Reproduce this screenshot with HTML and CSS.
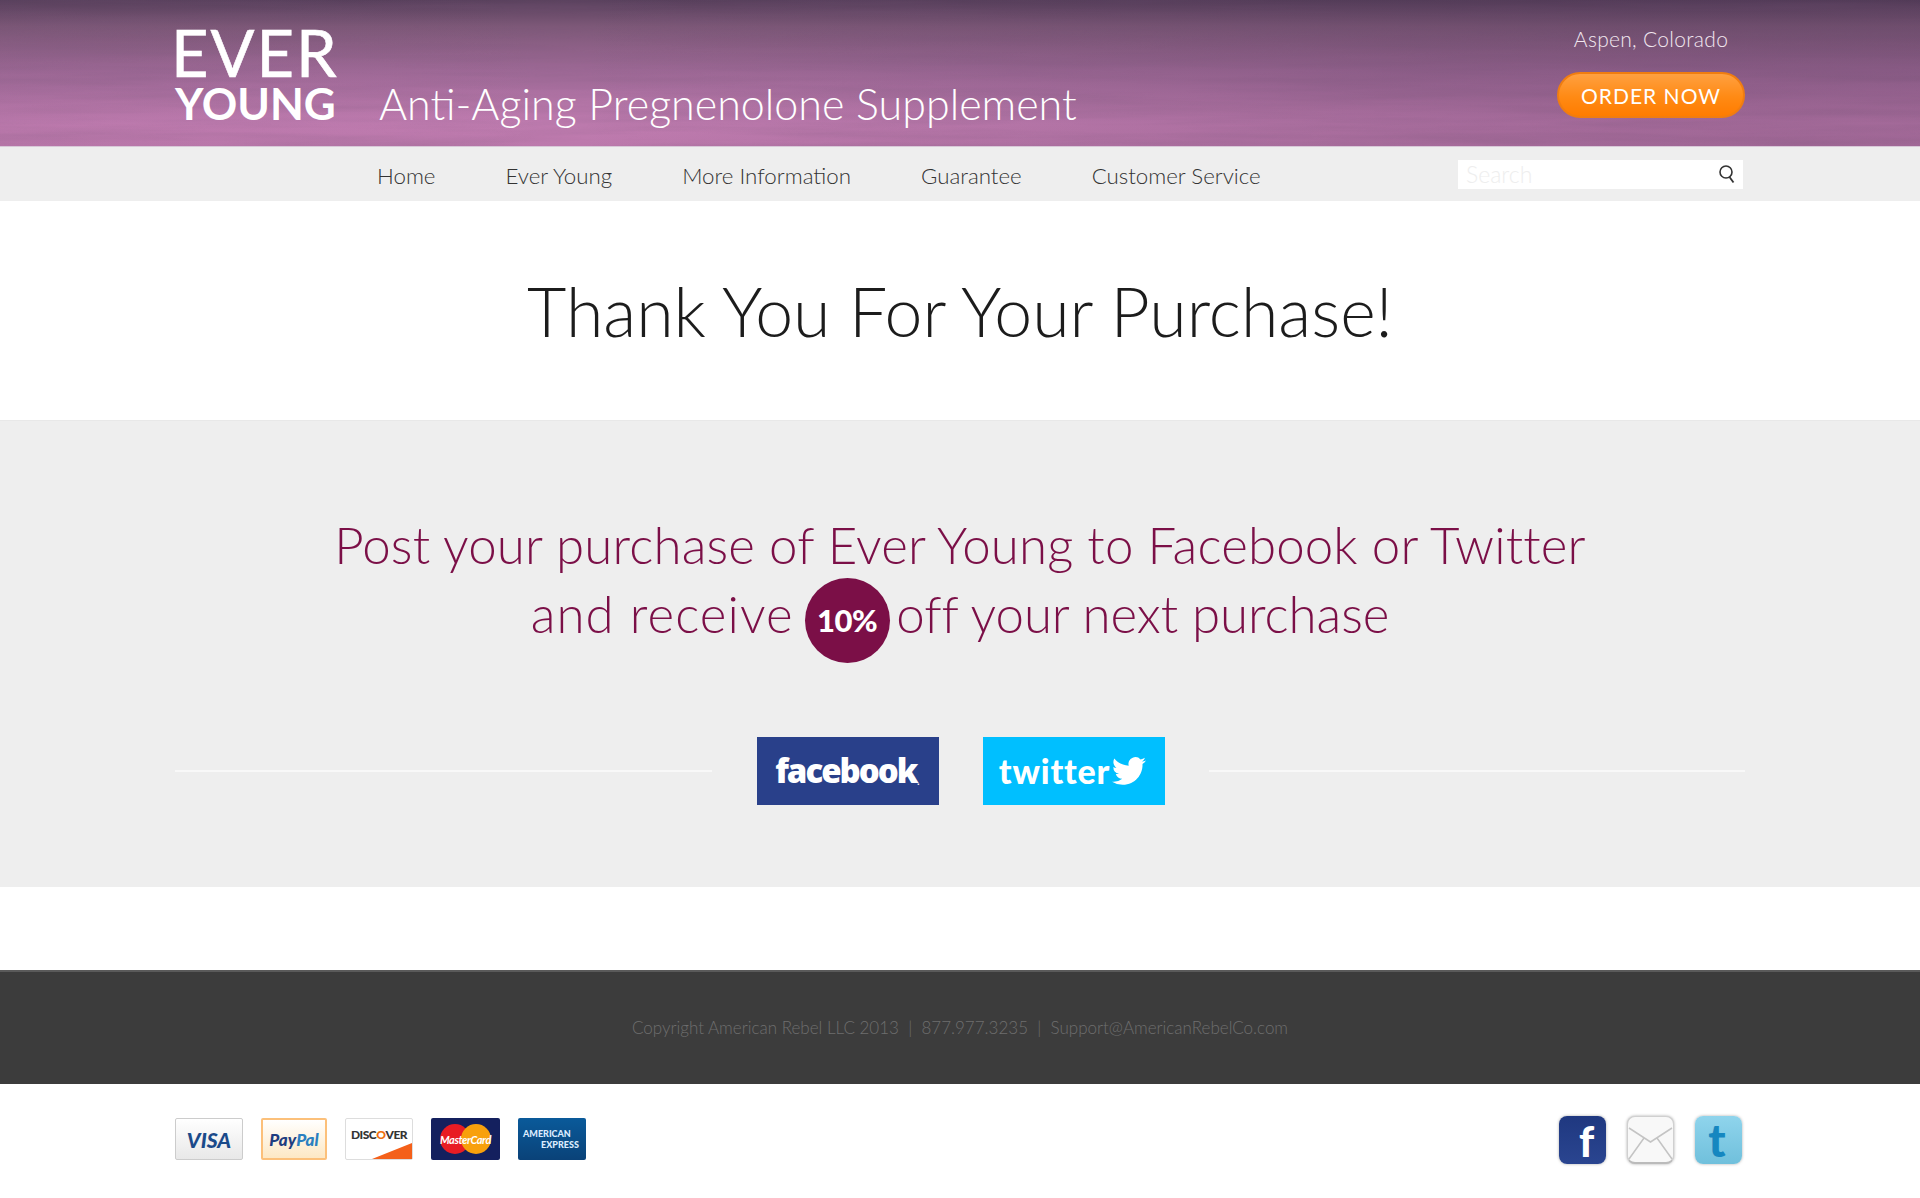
FILE: index.html
```html
<html>
    <head>
        <title>Ever Young - Thank You</title>
        <meta name="viewport" content="width=device-width, initial-scale=1.0">
        <link rel="stylesheet" href="styles.css">
    </head>
    <body>
        <header class="top">
            <svg class="grain" width="100%" height="100%" aria-hidden="true">
                <filter id="streaks">
                    <feTurbulence type="fractalNoise" baseFrequency="0.004 0.09" numOctaves="4" seed="7"/>
                    <feColorMatrix values="0 0 0 0 0.2  0 0 0 0 0.1  0 0 0 0 0.2  1.5 0 0 0 -0.55"/>
                </filter>
                <rect width="100%" height="100%" filter="url(#streaks)"/>
            </svg>
            <div class="wrap top_in">
                <div class="logo">
                    <div class="logo_a">EVER</div>
                    <div class="logo_b">YOUNG</div>
                </div>
                <div class="tagline">Anti-Aging Pregnenolone Supplement</div>
                <div class="top_right">
                    <div class="place">Aspen, Colorado</div>
                    <a class="order" href="#">ORDER NOW</a>
                </div>
            </div>
        </header>

        <nav class="menu">
            <div class="wrap menu_in">
                <a href="#">Home</a>
                <a href="#">Ever Young</a>
                <a href="#">More Information</a>
                <a href="#">Guarantee</a>
                <a href="#">Customer Service</a>
                <div class="search">
                    <span>Search</span>
                    <svg width="18" height="20" viewBox="0 0 18 20"><circle cx="8" cy="8" r="6" fill="none" stroke="#333" stroke-width="1.6"/><path d="M11.5 13l4 5.500" stroke="#333" stroke-width="1.8" fill="none"/></svg>
                </div>
            </div>
        </nav>

        <section class="thanks">
            <h1>Thank You For Your Purchase!</h1>
        </section>

        <section class="offer">
            <h2>Post your purchase of Ever Young to Facebook or Twitter</h2>
            <h2 class="line2"><span class="lead">and receive</span> <span class="badge">10%</span> off your next purchase</h2>
            <div class="wrap share">
                <div class="rule"></div>
                <a class="btn btn_fb" href="#">facebook<small>.</small></a>
                <a class="btn btn_tw" href="#">twitter<svg width="38" height="34" viewBox="0 0 24 24"><path fill="#fff" d="M23.95 4.57a10 10 0 0 1-2.82.77 4.96 4.96 0 0 0 2.16-2.72c-.95.55-2 .95-3.12 1.18a4.92 4.92 0 0 0-8.38 4.48C7.69 8.09 4.07 6.13 1.64 3.16a4.82 4.82 0 0 0-.66 2.47c0 1.71.87 3.21 2.19 4.1a4.9 4.9 0 0 1-2.23-.62v.06a4.92 4.92 0 0 0 3.95 4.83 5 5 0 0 1-2.21.08 4.94 4.94 0 0 0 4.6 3.42A9.87 9.87 0 0 1 0 19.54a13.94 13.94 0 0 0 7.55 2.21c9.05 0 14-7.5 14-13.99 0-.21 0-.42-.02-.63a9.94 9.94 0 0 0 2.46-2.55z"/></svg></a>
                <div class="rule"></div>
            </div>
        </section>

        <div class="gap"></div>

        <footer class="foot">Copyright American Rebel LLC 2013 &nbsp;|&nbsp; 877.977.3235 &nbsp;|&nbsp; Support@AmericanRebelCo.com</footer>

        <div class="wrap bottom">
            <div class="cards">
                <div class="card c_visa">VISA</div>
                <div class="card c_paypal"><b>Pay</b><i>Pal</i></div>
                <div class="card c_disc">DISC<u>O</u>VER</div>
                <div class="card c_mc"><span class="mc_r"></span><span class="mc_o"></span><em>MasterCard</em></div>
                <div class="card c_amex"><span>AMERICAN</span><span class="amex2">EXPRESS</span></div>
            </div>
            <div class="social">
                <div class="soc s_fb">f</div>
                <div class="soc s_mail">
                    <svg width="45" height="46" viewBox="0 0 45 46"><path d="M1 12l21.500 14L44 12M1 43l15-21M44 43L29 22" fill="none" stroke="#c4c4c4" stroke-width="1.500"/></svg>
                </div>
                <div class="soc s_tw">t</div>
            </div>
        </div>
    </body>
</html>
```

FILE: styles.css
```css
body {margin:0;background:#fff;font-family:"Lato",sans-serif;font-weight:300;color:#222;}
a {text-decoration:none;color:inherit;}
.wrap {width:1570px;margin:0 auto;}

/* header */
.top {position:relative;height:146px;overflow:hidden;background:linear-gradient(180deg,#58405c 0%,#7d5878 18%,#a06a98 50%,#c07cb0 85%,#bc79ac 100%);}
.top:after {content:"";position:absolute;inset:0;background:linear-gradient(90deg,rgba(60,40,70,.04) 0%,rgba(255,255,255,0) 30%,rgba(60,40,70,.22) 85%,rgba(60,40,70,.22) 100%);}
.grain {position:absolute;top:0;left:0;opacity:.25;}
.top_in {position:relative;z-index:1;display:flex;height:146px;}
.logo {color:#fff;padding-top:21px;width:204px;}
.logo_a {font-size:65px;line-height:62px;letter-spacing:2px;font-weight:400;-webkit-text-stroke:.6px #fff;margin-left:-4px;}
.logo_b {font-size:44px;line-height:40px;font-weight:700;}
.tagline {color:#fff;font-size:43px;margin-top:78px;line-height:52px;white-space:nowrap;}
.top_right {margin-left:auto;width:188px;text-align:center;color:#f2e8f0;}
.place {font-size:21px;line-height:26px;margin-top:26px;letter-spacing:.3px;}
.order {display:block;height:46px;margin-top:20px;box-sizing:border-box;border-radius:23px;border:2px solid #f07d10;background:linear-gradient(180deg,#ffa040 0%,#ff8a14 55%,#ff7c00 100%);color:#fff;font-size:21px;line-height:44px;font-weight:400;letter-spacing:1px;}

/* nav */
.menu {height:55px;background:#eee;border-top:1px solid #d8c8d8;box-sizing:border-box;}
.menu_in {display:flex;align-items:center;height:54px;padding:2px 0 0 202px;box-sizing:border-box;gap:70px;font-size:22.300px;color:#333;}
.search {margin:-2px 2px 0 auto;width:285px;height:29px;background:#fff;display:flex;justify-content:space-between;align-items:center;padding:0 7px 0 8px;box-sizing:border-box;font-size:23px;color:#eee;}

/* thanks */
.thanks {height:219px;display:flex;align-items:center;justify-content:center;}
h1 {margin:0;font-size:68px;font-weight:300;color:#1c1c1c;}

/* offer */
.offer {height:467px;background:#eee;border-top:1px solid #e8e8e8;box-sizing:border-box;padding-top:90px;text-align:center;color:#7b0f47;}
h2 {margin:0;font-size:51px;line-height:68px;font-weight:300;letter-spacing:.15px;}
.line2 {margin-top:-1px;letter-spacing:-.05px;}
.lead {letter-spacing:1.100px;}
.badge {display:inline-block;width:85px;height:85px;margin:0 -7px 0 -3px;border-radius:50%;background:#7b0f47;color:#fff;font-size:31px;font-weight:900;line-height:85px;letter-spacing:-.5px;vertical-align:middle;}
.share {display:flex;align-items:center;margin-top:73px;height:69px;}
.rule {flex:1;height:2px;background:#f8f8f8;}
.btn {display:flex;align-items:center;justify-content:center;width:182px;height:68px;color:#fff;font-weight:900;font-family:"Open Sans",sans-serif;}
.btn_fb {background:#29408a;font-size:33px;letter-spacing:-2px;margin:0 44px 0 45px;}
.btn_fb small {font-size:12px;align-self:flex-end;margin-bottom:16px;font-weight:400;letter-spacing:0;}
.btn_tw {background:#00bfff;font-size:34px;letter-spacing:.8px;margin-right:44px;font-family:"Lato",sans-serif;}

.gap {height:83px;}

/* footer */
.foot {height:114px;background:#3c3c3c;border-top:2px solid #5a5a5a;box-sizing:border-box;text-align:center;line-height:111px;color:#6e6e6e;font-size:17px;}
.bottom {display:flex;justify-content:space-between;height:114px;}
.cards {display:flex;gap:18px;padding-top:34px;}
.card {position:relative;width:68px;height:42px;box-sizing:border-box;border-radius:2px;display:flex;align-items:center;justify-content:center;font-family:"Lato",sans-serif;}
.c_visa {background:linear-gradient(180deg,#fff,#e8e8e8);border:1px solid #ccc;color:#1a4a8a;font-size:21px;font-weight:900;font-style:italic;}
.c_paypal {width:66px;background:linear-gradient(180deg,#fff,#fde8c4);border:2px solid #fcc07a;font-size:17px;font-weight:900;font-style:italic;}
.c_paypal b {color:#1f3d80;}
.c_paypal i {color:#2a80c0;}
.c_disc {background:#fff;border:1px solid #ddd;color:#333;font-size:12px;font-weight:900;letter-spacing:-.5px;padding-bottom:10px;}
.c_disc:after {content:"";position:absolute;right:0;bottom:0;border-bottom:16px solid #f4601a;border-left:40px solid transparent;}
.c_disc u {color:#f07010;text-decoration:none;}
.c_mc {width:69px;background:#14205e;color:#fff;}
.mc_r,.mc_o {position:absolute;top:6px;width:30px;height:30px;border-radius:50%;}
.mc_r {left:9px;background:#e81c24;}
.mc_o {left:30px;background:#f8a00c;}
.c_mc em {position:relative;font-size:11px;font-weight:700;letter-spacing:-.4px;}
.c_amex {flex-direction:column;background:linear-gradient(180deg,#0a5a9a,#0a4278);color:#dcecff;font-size:9px;font-weight:900;line-height:11px;align-items:flex-start;padding-left:5px;}
.amex2 {margin-left:18px;}
.social {display:flex;gap:21px;padding-top:32px;margin-right:3px;}
.soc {width:47px;height:48px;border-radius:8px;box-sizing:border-box;display:flex;justify-content:center;align-items:flex-end;font-family:"Lato",sans-serif;font-weight:900;box-shadow:0 0 3px #aaa;}
.s_fb {background:linear-gradient(180deg,#1f3880,#2a4590);color:#fff;font-size:42px;line-height:46px;padding-left:8px;}
.s_mail {background:#f8f8f8;border:1px solid #d0d0d0;border-bottom:2px solid #bbb;}
.s_tw {background:linear-gradient(180deg,#8fd4ec,#70c0dc);color:#1587c0;font-size:46px;line-height:48px;padding-right:3px;}
```
